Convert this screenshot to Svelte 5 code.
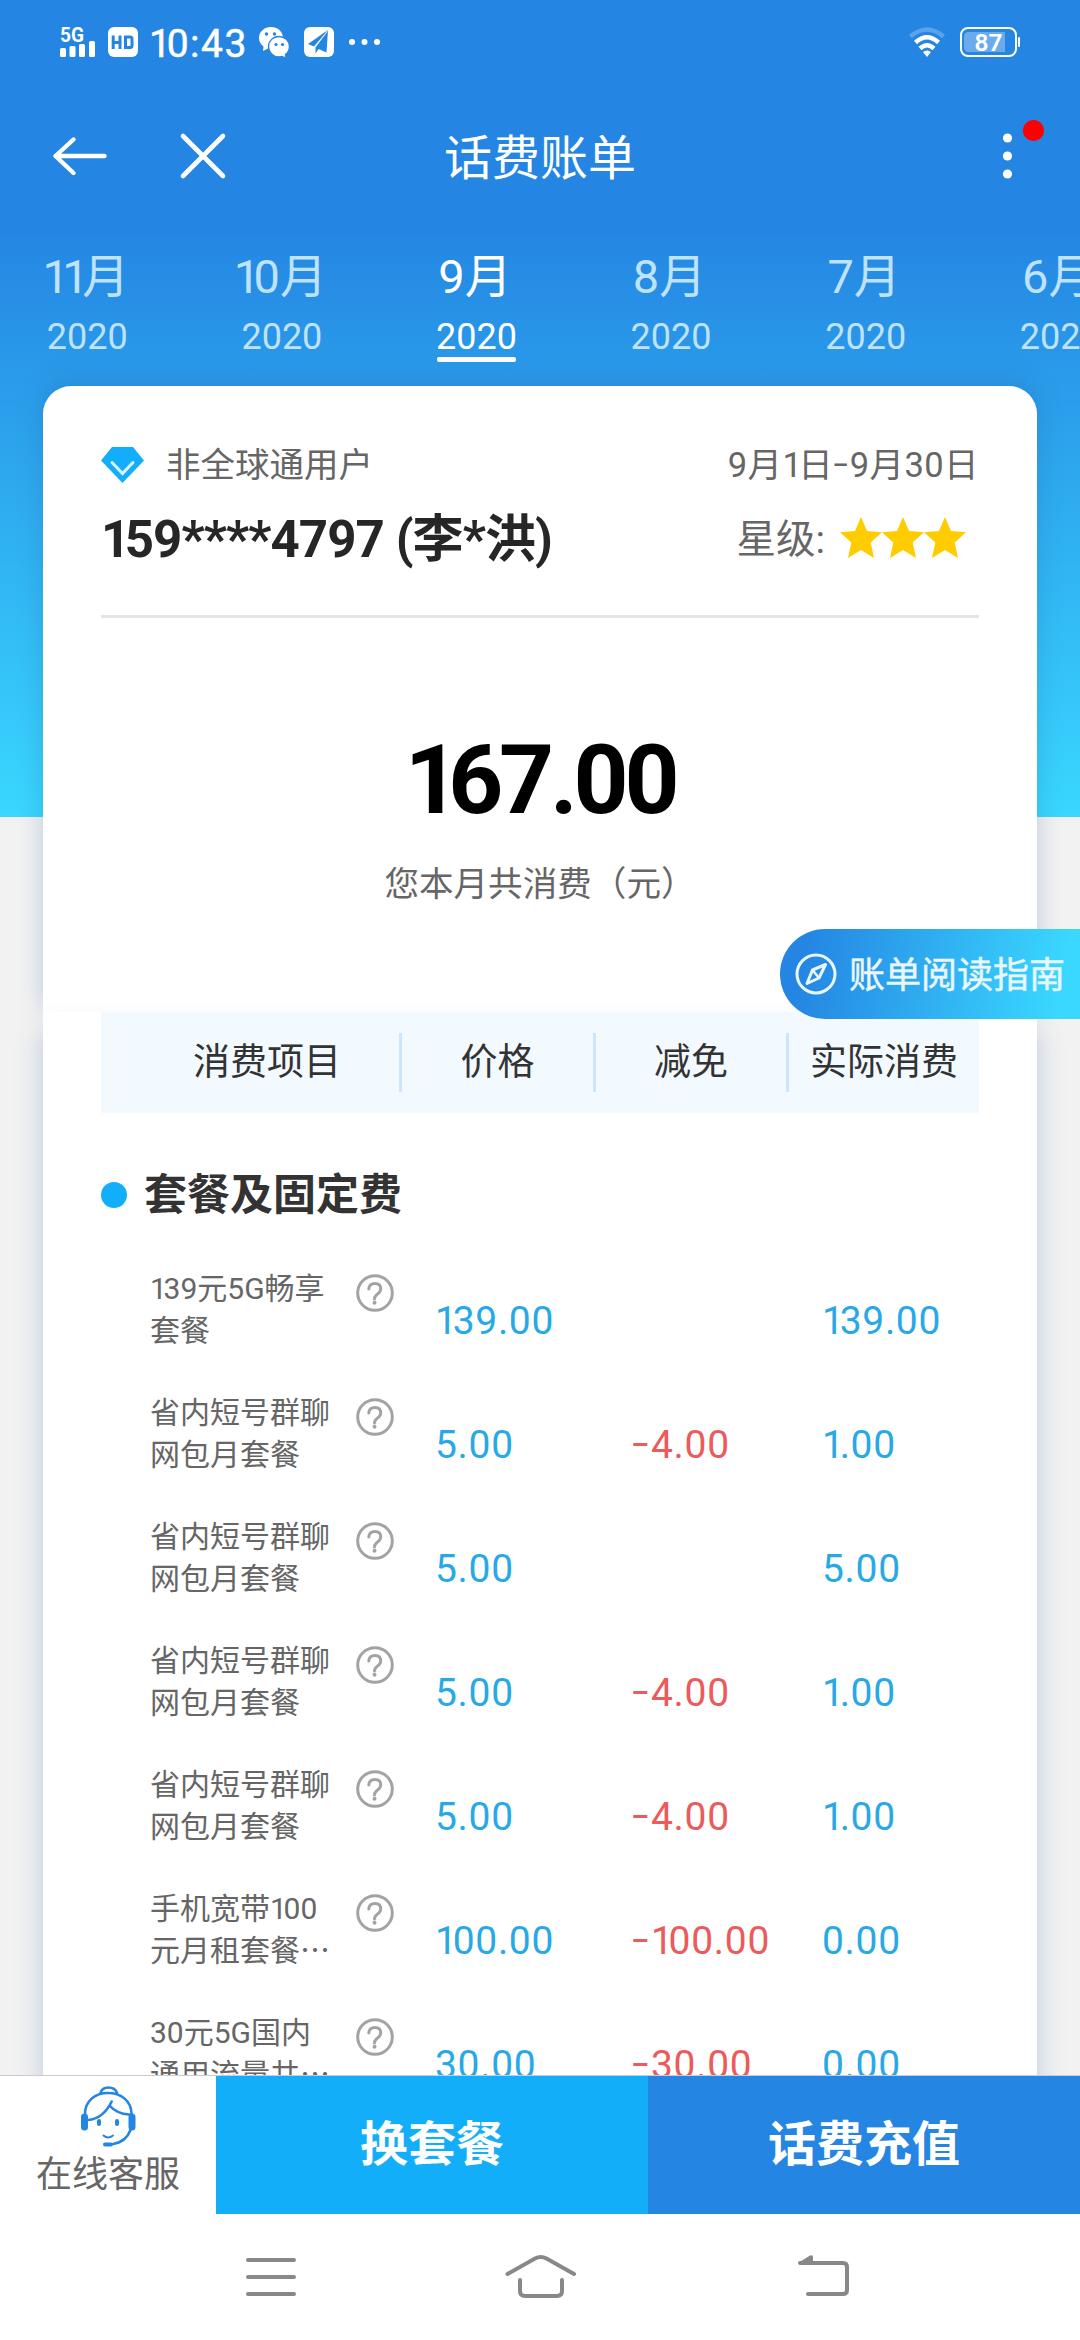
<script>
  const months = [
    { month: '11月', year: '2020' },
    { month: '10月', year: '2020' },
    { month: '9月', year: '2020' },
    { month: '8月', year: '2020' },
    { month: '7月', year: '2020' },
    { month: '6月', year: '2020' }
  ];
  let selected = '9月';

  const items = [
    { lines: ['139元5G畅享', '套餐'], price: '139.00', discount: '', actual: '139.00' },
    { lines: ['省内短号群聊', '网包月套餐'], price: '5.00', discount: '-4.00', actual: '1.00' },
    { lines: ['省内短号群聊', '网包月套餐'], price: '5.00', discount: '', actual: '5.00' },
    { lines: ['省内短号群聊', '网包月套餐'], price: '5.00', discount: '-4.00', actual: '1.00' },
    { lines: ['省内短号群聊', '网包月套餐'], price: '5.00', discount: '-4.00', actual: '1.00' },
    { lines: ['手机宽带100', '元月租套餐…'], price: '100.00', discount: '-100.00', actual: '0.00' },
    { lines: ['30元5G国内', '通用流量共…'], price: '30.00', discount: '-30.00', actual: '0.00' }
  ];
</script>

<!-- 1 is set tighter, the minus wider and higher, the ellipsis in the middle of the line -->
{#snippet num(text)}{#each text.split(/([1…-])/) as part}{#if part === '1'}<span class="one">1</span>{:else if part === '-'}<span class="dash">-</span>{:else if part === '…'}<span class="dots-end">…</span>{:else}{part}{/if}{/each}{/snippet}

<div class="phone">
  <div class="screen">
    <div class="status">
      <svg class="signal" width="36" height="30" viewBox="0 0 36 30" fill="#fff">
        <text x="0" y="15" font-size="20.500" font-weight="700" textLength="24" lengthAdjust="spacingAndGlyphs">5G</text>
        <rect x="0" y="21" width="6" height="9" rx="1.5" />
        <rect x="9.5" y="19" width="6" height="11" rx="1.5" />
        <rect x="19" y="17" width="6" height="13" rx="1.5" />
        <rect x="29" y="14" width="6" height="16" rx="1.5" />
      </svg>
      <svg class="hd" width="30" height="30" viewBox="0 0 30 30">
        <rect width="30" height="30" rx="6" fill="#fff" />
        <path d="M5.200 8.500V22M12 8.500V22M5 15.500h7M17.500 10h4.500q2 0 2 2v6.500q0 2-2 2h-4.500z" fill="none" stroke="#2485e2" stroke-width="3" />
      </svg>
      <span class="clock">{@render num('10:43')}</span>
      <svg class="wechat" width="31" height="31" viewBox="0 0 31 31">
        <path d="M12 0C5.300 0 0 4.700 0 11c0 3.600 1.700 6.400 4.500 8.500L4 24l5-2.500 3 .5c6.500 0 12-4.500 12-11S18.600 0 12 0z" fill="#fff" />
        <path d="M20 9.500c-5.800 0-10.500 4.300-10.500 10S14.200 30 20 30l3-.5 4 1.500-.6-3.500c2.500-1.900 4-4.700 4-8 0-5.700-4.700-10-10.400-10z" fill="#fff" stroke="#2485e2" stroke-width="1.300" />
        <g fill="#2485e2"><circle cx="7.500" cy="7" r="1.700" /><circle cx="15.500" cy="7" r="1.700" /><circle cx="17" cy="17.500" r="1.600" /><circle cx="23.500" cy="17.500" r="1.600" /></g>
      </svg>
      <svg class="plane" width="30" height="30" viewBox="0 0 30 30">
        <rect width="30" height="30" rx="6" fill="#fff" />
        <path d="M24 3L4 17l6 2.500zM24 3L22.500 25.500l-8-3.500-3 4.500v-6.500z" fill="#2485e2" />
        <path d="M23.500 4L11 20.500" stroke="#fff" stroke-width=".8" />
      </svg>
      <svg class="more" width="31" height="6" viewBox="0 0 31 6" fill="#fff">
        <circle cx="3" cy="3" r="3" /><circle cx="15.500" cy="3" r="3" /><circle cx="28" cy="3" r="3" />
      </svg>
      <svg class="wifi" width="36" height="29" viewBox="0 0 36 29" fill="none" stroke="#fff" stroke-width="4.500">
        <path d="M1.500 8.500Q18-5.500 34.500 8.500" opacity=".25" />
        <path d="M6.500 14.500Q18 4 29.500 14.500" />
        <path d="M11 20.500Q18 14 25 20.500" />
        <path d="M14 24q4-3 8 0l-4 5z" fill="#fff" stroke="none" />
      </svg>
      <svg class="battery" width="61" height="30" viewBox="0 0 61 30">
        <rect x="1" y="1" width="55" height="28" rx="7" fill="none" stroke="#fff" stroke-width="2" />
        <path d="M45 5v20H9q-5 0-5-5V10q0-5 5-5z" fill="#fff" opacity=".32" />
        <rect x="58" y="10" width="2" height="10" rx="1" fill="#fff" />
        <text x="14.500" y="23.800" font-size="24.500" font-weight="600" fill="#fff">87</text>
      </svg>
    </div>

    <div class="navbar">
      <svg class="back" width="54" height="40" viewBox="0 0 54 40" fill="none" stroke="#fff" stroke-width="4.400" stroke-linecap="round" stroke-linejoin="round">
        <path d="M51.500 20H2.500M20.500 3.500L2.500 20L20.500 37" />
      </svg>
      <svg class="close" width="46" height="46" viewBox="0 0 46 46" stroke="#fff" stroke-width="4.600" stroke-linecap="round">
        <path d="M3 3l40 40M43 3L3 43" />
      </svg>
      <h1>话费账单</h1>
      <svg class="dots" width="46" height="66" viewBox="0 0 46 66">
        <g fill="#fff"><circle cx="7.500" cy="23" r="4.600" /><circle cx="7.500" cy="41" r="4.600" /><circle cx="7.500" cy="59" r="4.600" /></g>
        <circle cx="33.500" cy="15.500" r="10.600" fill="#f00" />
      </svg>
    </div>

    <div class="hero">
      <div class="months">
        {#each months as m}
          <div class="month" class:active={m.month === selected}>
            <span class="name">{@render num(m.month)}</span>
            <span class="year">{m.year}</span>
          </div>
        {/each}
      </div>
    </div>

    <div class="card summary">
      <div class="line">
        <svg class="gem" width="43" height="36" viewBox="0 0 43 36">
          <path d="M11 0h21l11 13.500L21.500 36 0 13.500z" fill="#12aef9" />
          <path d="M11 15.500l10.500 11L32 15.500" fill="none" stroke="#d8f2ff" stroke-width="3" stroke-linecap="round" />
        </svg>
        <span class="kind">非全球通用户</span>
        <span class="period">{@render num('9月1日-9月30日')}</span>
      </div>
      <div class="line second">
        <strong>{@render num('159****4797 (李*洪)')}</strong>
        <span class="level">星级:</span>
        {#each [0, 1, 2] as star}
          <svg class="star" width="42" height="41" viewBox="0 0 42 41">
            <path d="M21 0l6 14 15 1.300-11.300 10.200L34 41l-13-8-13 8 3.300-15.500L0 15.300 15 14z" fill="#fc0" />
          </svg>
        {/each}
      </div>
      <div class="total">{@render num('167.00')}</div>
      <div class="caption">您本月共消费（元）</div>
    </div>

    <div class="card detail">
      <div class="thead">
        <span>消费项目</span>
        <span>价格</span>
        <span>减免</span>
        <span>实际消费</span>
      </div>
      <h2><i></i>套餐及固定费</h2>
      {#each items as item}
        <div class="row">
          <div class="label">
            {#each item.lines as line}
              <div>{@render num(line)}</div>
            {/each}
          </div>
          <svg class="help" width="38" height="38" viewBox="0 0 38 38" fill="none" stroke="#a3a3a3">
            <circle cx="19" cy="19" r="17.300" stroke-width="3" />
            <path d="M12.800 15q.4-5.500 6.200-5.500 5.700 0 5.700 5.200 0 2.800-3 5.200-3.200 2.400-3.200 5" stroke-width="3" stroke-linecap="round" />
            <circle cx="18.500" cy="28.700" r="2" fill="#a3a3a3" stroke="none" />
          </svg>
          <span class="amount price">{@render num(item.price)}</span>
          <span class="amount discount">{@render num(item.discount)}</span>
          <span class="amount actual">{@render num(item.actual)}</span>
        </div>
      {/each}
    </div>

    <div class="guide">
      <svg width="42" height="42" viewBox="0 0 42 42" fill="none" stroke="#e9f6ff" stroke-width="3">
        <circle cx="21" cy="21" r="19" />
        <path d="M30.500 11.500L24 25 12 30.500 17.500 17z" stroke-linejoin="round" />
        <path d="M17.500 17l6.500 8" stroke-width="2.500" />
      </svg>
      <span>账单阅读指南</span>
    </div>
  </div>

  <div class="actions">
    <div class="service">
      <svg width="56" height="62" viewBox="0 0 56 62" fill="none" stroke="#2485e2" stroke-width="2.600" stroke-linecap="round">
        <path d="M5 29C5 16 15 8 28 8S51.500 16 51.500 29" />
        <path d="M20.500 8q1.500-5.500 8-5.500T37 8" />
        <path d="M8 35Q23 34 31.700 16.500M29.500 20.500Q37 29 49 29.500" />
        <path d="M50.500 45Q46 57 33 59" />
        <path d="M25 59.500h6" stroke-width="4" />
        <path d="M23.500 50.500q4.500 4 9.500 0" stroke-width="2" />
        <path d="M4.500 32v10M52 32v10" stroke-width="7" />
        <path d="M19 36v3M37 36v3" stroke-width="4" />
      </svg>
      <span>在线客服</span>
    </div>
    <div class="action change">换套餐</div>
    <div class="action recharge">话费充值</div>
  </div>

  <div class="keys">
    <svg width="52" height="40" viewBox="0 0 52 40" stroke="#888" stroke-width="4" stroke-linecap="round">
      <path d="M3 3h46M3 20h46M3 37h46" />
    </svg>
    <svg class="home" width="72" height="46" viewBox="0 0 72 46" fill="none" stroke="#888" stroke-width="4" stroke-linecap="round">
      <path d="M2.500 20L30 4.500q5.700-3 11.500 0L69 20M15 26v11q0 5 5 5h32q5 0 5-5V26" />
    </svg>
    <svg class="return" width="53" height="44" viewBox="0 0 53 44" fill="none" stroke="#888" stroke-width="4" stroke-linecap="round">
      <path d="M3 8h43q4 0 4 4v23q0 4-4 4H11" />
      <path d="M1 8L13 .5q3-1 3 1.500v6z" fill="#888" stroke="none" />
    </svg>
  </div>
</div>

<style>
  :global(body) {
    margin: 0;
  }
  .phone {
    display: flex;
    flex-direction: column;
    width: 1080px;
    height: 2340px;
    overflow: hidden;
    background: #fff;
    font-family: Roboto, "Noto Sans CJK SC", sans-serif;
    line-height: 1.4;
  }
  svg {
    display: block;
    flex: none;
    overflow: visible;
  }
  text {
    font-family: Roboto, sans-serif;
  }
  .one {
    letter-spacing: -0.11em;
  }
  .dash {
    display: inline-block;
    margin: 0 0.13em 0 0.08em;
    letter-spacing: 0;
    transform: translateY(-0.05em) scaleX(1.5);
  }
  .dots-end {
    font-family: "Noto Sans CJK SC", sans-serif;
    line-height: 0;
  }

  .screen {
    position: relative;
    height: 2075px;
    flex: none;
    overflow: hidden;
    background: #f2f2f2;
  }
  .status {
    display: flex;
    align-items: center;
    height: 84px;
    padding: 0 59px 0 60px;
    background: #2485e2;
  }
  .hd { margin-left: 12px; }
  .clock {
    width: 108px;
    margin-left: 11px;
    padding-top: 4px;
    font-size: 39px;
    line-height: 44px;
    letter-spacing: 1.5px;
    color: #fff;
    -webkit-text-stroke: 0.5px #fff;
  }
  .wechat { margin-left: 2px; }
  .plane { margin-left: 14px; }
  .more { margin-left: 15px; }
  .wifi { margin-left: auto; }
  .battery { margin-left: 15px; }

  .navbar {
    display: flex;
    align-items: center;
    height: 136px;
    padding: 7px 34px 0 53px;
    box-sizing: border-box;
    background: #2485e2;
  }
  .close { margin-left: 73px; }
  .navbar h1 {
    width: 200px;
    margin: 6px 0 0 214px;
    font-size: 48px;
    line-height: 60px;
    font-weight: 400;
    color: #fff;
    text-align: center;
    white-space: nowrap;
  }
  .dots { margin: 0 0 16px auto; }

  .hero {
    height: 597px;
    background: linear-gradient(#2485e2, #3ad7ff);
  }
  .months {
    display: flex;
    width: 1180px;
    margin-left: -10px;
    padding-top: 25px;
  }
  .month {
    display: flex;
    flex-direction: column;
    align-items: center;
    width: 194.6px;
    flex: none;
    color: #bfe2ff;
  }
  .name {
    margin-left: -3px;
    font-size: 47px;
    line-height: 64px;
  }
  .name .one {
    letter-spacing: -0.14em;
  }
  .year {
    position: relative;
    height: 53px;
    padding-top: 6px;
    box-sizing: border-box;
    font-size: 36px;
    line-height: 45px;
  }
  .active { color: #fff; }
  .active .year::after {
    content: '';
    position: absolute;
    left: 1px;
    right: 1px;
    bottom: 0;
    height: 5px;
    border-radius: 2px;
    background: #fff;
  }

  .card {
    position: relative;
    width: 994px;
    margin: 0 auto;
    padding: 0 58px;
    box-sizing: border-box;
    background: #fff;
  }
  .summary {
    height: 626px;
    margin-top: -431px;
    padding-top: 52px;
    border-radius: 28px 28px 0 0;
    box-shadow: 0 -4px 26px rgba(40, 90, 150, 0.26);
  }
  .line {
    display: flex;
    align-items: center;
    height: 54px;
    font-size: 34.5px;
    color: #666;
    white-space: nowrap;
  }
  .kind { margin-left: 22px; }
  .period {
    margin-left: auto;
    letter-spacing: 0.4px;
  }
  .second {
    align-items: flex-start;
    height: 126px;
    border-bottom: 3px solid #e5e5e5;
    box-sizing: border-box;
  }
  .second strong {
    margin-top: 16px;
    font-size: 51px;
    line-height: 64px;
    letter-spacing: -0.9px;
    color: #262626;
  }
  .level {
    margin: 20px 15px 0 auto;
    font-size: 39.5px;
    line-height: 56px;
  }
  .star { margin-top: 25px; }
  .star:last-child { margin-right: 13px; }
  .total {
    margin-top: 94px;
    font-size: 96px;
    line-height: 136px;
    font-weight: 700;
    letter-spacing: -4.2px;
    color: #000;
    text-align: center;
  }
  .total .one {
    letter-spacing: -0.12em;
  }
  .caption {
    margin-top: 11px;
    font-size: 34.6px;
    line-height: 50px;
    color: #666;
    text-align: center;
  }

  .detail {
    height: 1200px;
    box-shadow: 0 18px 26px rgba(40, 90, 150, 0.26);
  }
  .thead {
    display: grid;
    grid-template-columns: 298px 194px 193px 193px;
    align-items: center;
    height: 101px;
    background: #f2f9ff;
    font-size: 37px;
    color: #333;
    text-align: center;
  }
  .thead span {
    line-height: 59px;
    border-left: 3px solid #cce6ff;
    white-space: nowrap;
  }
  .thead span:first-child {
    border-left: none;
    padding-left: 34px;
  }
  h2 {
    display: flex;
    align-items: center;
    gap: 17px;
    height: 60px;
    margin: 52px 0 0;
    font-size: 43px;
    color: #333;
  }
  h2 i {
    width: 26px;
    height: 26px;
    border-radius: 50%;
    background: #12aef9;
  }
  .row {
    display: grid;
    grid-template-columns: 206px 79px 197px 190px 1fr;
    height: 124px;
    padding-left: 49px;
  }
  h2 + .row { margin-top: 43px; }
  .label {
    font-size: 30px;
    line-height: 42px;
    color: #666;
    white-space: nowrap;
  }
  .help { margin-top: 6px; }
  .amount {
    padding-top: 30px;
    font-size: 39px;
    line-height: 46px;
    letter-spacing: 0.7px;
    color: #28a9e5;
    white-space: nowrap;
  }
  .discount { color: #eb5b5b; }

  .guide {
    position: absolute;
    top: 929px;
    right: 0;
    display: flex;
    align-items: center;
    width: 300px;
    height: 90px;
    padding-left: 15px;
    box-sizing: border-box;
    border-radius: 45px 0 0 45px;
    background: linear-gradient(100deg, #2485e2 8%, #3ad7ff 92%);
    color: #e9f6ff;
    font-size: 36px;
    white-space: nowrap;
  }
  .guide span {
    margin: 4px 0 0 12px;
    -webkit-text-stroke: 0.5px #e9f6ff;
  }

  .actions {
    display: flex;
    height: 139px;
    flex: none;
    border-top: 1px solid #ccc;
    box-sizing: border-box;
  }
  .service {
    display: flex;
    flex-direction: column;
    align-items: center;
    width: 216px;
    padding-top: 9px;
    box-sizing: border-box;
    font-size: 36px;
    line-height: 56px;
    color: #666;
  }
  .action {
    width: 432px;
    line-height: 137px;
    font-size: 48px;
    font-weight: 700;
    color: #fff;
    text-align: center;
  }
  .change { background: #12aef9; }
  .recharge { background: #2485e2; }
  .keys {
    display: flex;
    align-items: center;
    height: 126px;
    padding-left: 245px;
  }
  .home { margin-left: 208px; }
  .return { margin-left: 220px; }
</style>
